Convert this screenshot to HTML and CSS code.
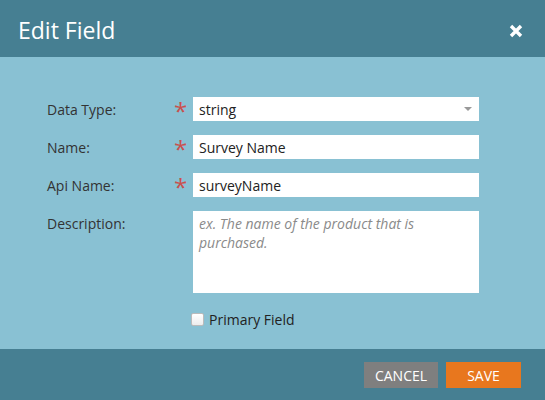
FILE: index.html
```html
<!DOCTYPE html>
<html>
<head>
<meta charset="utf-8">
<link rel="stylesheet" href="styles.css">
</head>
<body>
<div class="dialog">
  <div class="header">
    <h1 class="title">Edit Field</h1>
    <svg class="close" width="14" height="14" viewBox="0 0 14 14"><path d="M2 2 L12 12 M12 2 L2 12" stroke="#fff" stroke-width="3.4" stroke-linecap="butt"/></svg>
  </div>
  <div class="body">
    <div class="form">
      <label class="label">Data Type:</label>
      <span class="req">*</span>
      <div class="input select"><span>string</span><span class="arrow"></span></div>

      <label class="label">Name:</label>
      <span class="req">*</span>
      <div class="input"><span>Survey Name</span></div>

      <label class="label">Api Name:</label>
      <span class="req">*</span>
      <div class="input"><span>surveyName</span></div>

      <label class="label label-top">Description:</label>
      <span class="req"></span>
      <div class="textarea">ex. The name of the product that is purchased.</div>

      <span class="label"></span>
      <span class="req"></span>
      <div class="check"><span class="box"></span><span>Primary Field</span></div>
    </div>
  </div>
  <div class="footer">
    <button class="btn cancel">CANCEL</button>
    <button class="btn save">SAVE</button>
  </div>
</div>
</body>
</html>
```
FILE: styles.css
```css
* { box-sizing: border-box; }
html, body { margin: 0; padding: 0; }
body {
  width: 545px;
  height: 400px;
  font-family: "Open Sans", "Noto Sans", sans-serif;
  background: #89c1d3;
  overflow: hidden;
}
.dialog {
  display: flex;
  flex-direction: column;
  height: 400px;
}
.header {
  height: 57px;
  background: #467f92;
  display: flex;
  align-items: center;
  justify-content: space-between;
  padding: 0 22px 0 18px;
}
.title {
  margin: 0;
  font-weight: 400;
  font-size: 23px;
  color: #fff;
  position: relative;
  top: 1px;
}
.close { display: block; margin-top: 4px; }
.body {
  flex: 1;
  padding: 40px 66px 0 47px;
}
.form {
  display: grid;
  grid-template-columns: 126px 20px 286px;
  row-gap: 14px;
  align-items: center;
}
.label {
  font-size: 14px;
  color: #333;
}
.label-top { align-self: start; padding-top: 3px; }
.req {
  color: #c9504d;
  font-size: 24px;
  line-height: 24px;
  height: 24px;
  text-align: left;
  padding-left: 1px;
  position: relative;
  top: 2px;
}
.input {
  height: 24px;
  background: #fff;
  display: flex;
  align-items: center;
  justify-content: space-between;
  padding: 0 7px 0 6px;
  font-size: 14px;
  color: #222;
}
.arrow {
  width: 0;
  height: 0;
  border-left: 4px solid transparent;
  border-right: 4px solid transparent;
  border-top: 4px solid #999;
}
.textarea {
  height: 82px;
  background: #fff;
  padding: 3px 6px;
  font-size: 14px;
  line-height: 19px;
  font-style: italic;
  color: #8a8a8a;
}
.check {
  display: flex;
  align-items: center;
  margin-left: -2px;
  margin-top: 1px;
  font-size: 14px;
  color: #222;
}
.box {
  width: 13px;
  height: 13px;
  border: 1px solid #bbb;
  border-radius: 2px;
  background: linear-gradient(#fff, #ededed);
  margin-right: 5px;
}
.footer {
  height: 51px;
  background: #467f92;
  display: flex;
  justify-content: flex-end;
  align-items: flex-start;
  padding: 13px 24px 0 0;
  gap: 8px;
}
.btn {
  height: 26px;
  border: none;
  color: #fff;
  font-family: "Open Sans", "Noto Sans", sans-serif;
  font-size: 14px;
  padding: 0;
  cursor: pointer;
}
.cancel { width: 74px; background: #7f7f7f; }
.save { width: 75px; background: #e8771e; }
```
